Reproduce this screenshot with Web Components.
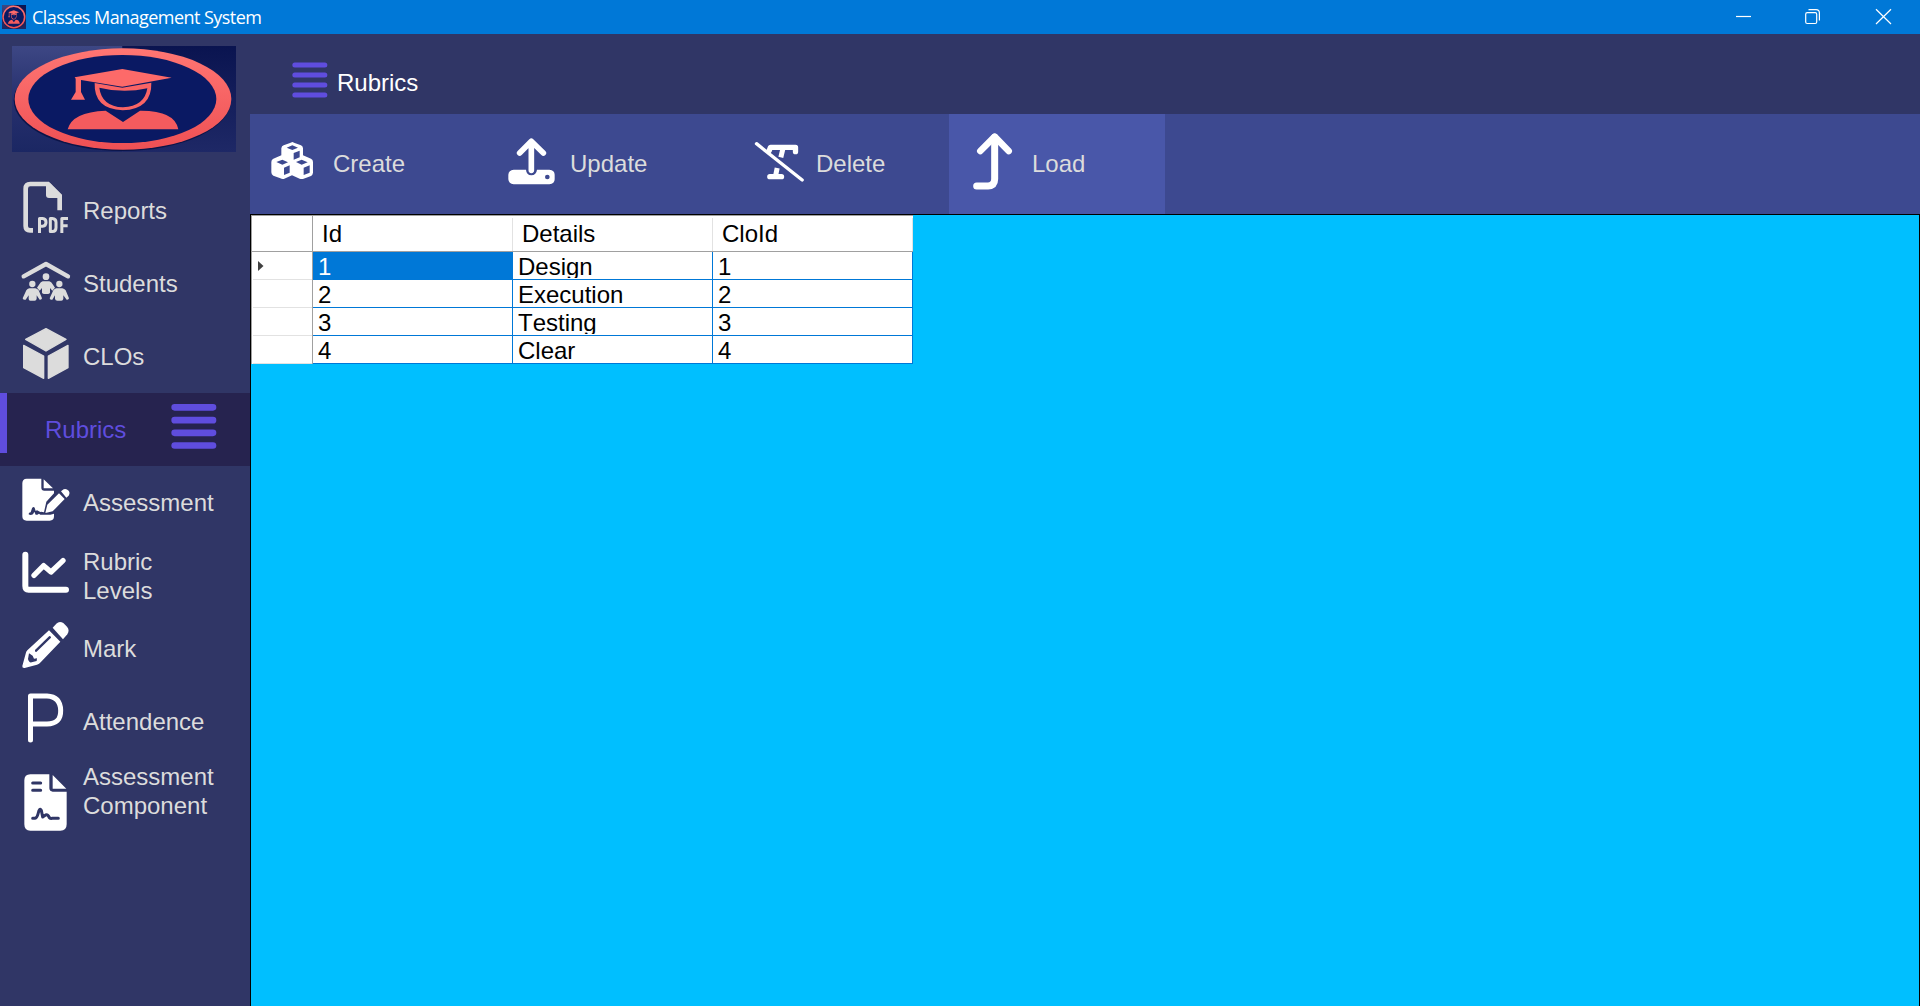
<!DOCTYPE html>
<html lang="en">
<head>
<meta charset="utf-8">
<title>Classes Management System</title>
<style>
html,body{margin:0;height:100%;overflow:hidden}
body{font-family:"Liberation Sans",Arial,sans-serif;font-size:24px;font-kerning:none}
</style>
</head>
<body>
<app-window></app-window>
<script>
const define = (name, html, setup) => customElements.define(name, class extends HTMLElement {
  connectedCallback() {
    if (this.shadowRoot) return;
    const t = document.createElement('template');
    t.innerHTML = typeof html === 'function' ? html(this) : html;
    this.attachShadow({ mode: 'open' }).append(t.content.cloneNode(true));
    if (setup) setup(this, this.shadowRoot);
  }
});

const icons = {
  reports: ['0 27 249 219', `<g fill="none" stroke="#dcdcdc"><path d="M99 196H90Q77 196 77 183V71Q77 57 91 57H144L179 92V136" stroke-width="14"/></g><path fill="#dcdcdc" d="M138 55H150L184 89V99H147Q138 99 138 90Z"/><g fill="none" stroke="#dcdcdc" stroke-width="9" stroke-linejoin="round"><path d="M118.500 204V160.500H128Q138 161 138 172T128 184H119"/><path d="M151 160.500V199.500H157Q168 199 168 188V172Q168 161 157 160.500Z"/><path d="M185.500 204V160.500H204M186 182H203"/></g>`],
  students: ['0 246 249 219', `<path d="M71 334L138 297L204 334" fill="none" stroke="#dcdcdc" stroke-width="13" stroke-linecap="round" stroke-linejoin="round"/><g fill="#dcdcdc"><circle cx="138" cy="335" r="10"/><circle cx="97" cy="357" r="9.500"/><circle cx="178" cy="357" r="9.500"/><path d="M128 349H148Q154 350 158 358L165 368L157 377L150 369V383Q148 387 143 387H133Q128 387 126 383V369L119 377L111 368L118 358Q122 350 128 349Z"/><path d="M88 370H106Q112 371 116 376L126 400Q125 405 119 404L110 391V401Q109 407 104 407H91Q86 407 86 401V391L77 404Q70 406 68 400L79 376Q82 371 88 370Z"/><path d="M169 370H187Q193 371 197 376L207 400Q206 405 200 404L190 391V401Q189 407 184 407H172Q166 407 165 401V391L157 404Q151 406 149 400L160 376Q163 371 169 370Z"/></g>`],
  clos: ['0 465 249 219', `<g fill="#dcdcdc" stroke="#dcdcdc" stroke-width="4" stroke-linejoin="round"><path d="M138 491L198 523L138 558L77 523Z"/><path d="M71 541L131 573V640L71 608Z"/><path d="M204 541L145 573V640L204 608Z"/></g>`],
  rubrics: ['498 24 252 219', `<path d="M524 67H639M524 105.500H639M524 143.500H639M524 181.500H639" stroke="#5f4dde" stroke-width="20" stroke-linecap="round"/>`],
  assessment: ['0 243 249 219', `<path fill="#fff" d="M80 281H124V308Q124 317 133 317H162V325L139 350L132 382L127 381Q124 379 121 381L114 377Q111 374 107 378L104 368Q100 363 96 370L92 382Q85 383 86 388Q91 392 99 388L103 380L107 389H112L117 386L121 389Q150 391 162 386V394Q162 407 149 407H80Q67 407 67 394V295Q67 281 80 281ZM131 283L159 310H131Z"/><path fill="#fff" d="M177 325L194 342L158 379L136 384L142 359ZM183 319L191 313Q199 310 206 317Q211 324 206 332L199 338Z"/>`],
  levels: ['0 462 249 219', `<g fill="none" stroke="#fff" stroke-linecap="round" stroke-linejoin="round"><path d="M76 509V603Q76 614 86 614H198" stroke-width="18"/><path d="M102 571L131 542L153 561L189 527" stroke-width="16"/></g>`],
  mark: ['0 21 249 219', `<path fill="#fff" d="M158 68L169 56Q178 47 190 54L201 65Q210 75 202 88L189 103Z"/><path fill="#fff" fill-rule="evenodd" d="M147 76L181 110L122 172Q118 177 111 179L74 189Q66 190 67 183L77 146Q78 140 82 136ZM148 93L105 135Q103 141 109 141L153 98Q154 93 148 93ZM87 145L84 162Q87 174 95 172L110 168L111 160L102 161L98 152Z"/>`],
  attendence: ['0 240 249 219', `<path d="M91.500 405V273H141Q181 275 182 316T141 357H94" fill="none" stroke="#fff" stroke-width="15" stroke-linecap="round" stroke-linejoin="round"/>`],
  component: ['0 459 249 219', `<path fill="#fff" d="M91 508H148V550Q149 560 158 560H200V658Q200 677 181 677H91Q73 677 73 658V526Q73 508 91 508ZM158 510L199 551H158Z"/><path d="M98 534H122M98 556H122" stroke="#303666" stroke-width="9" stroke-linecap="round"/><path d="M98 640H105Q111 639 114 627Q119 606 124 616L128 636L137 630Q144 627 148 638Q151 641 157 640H175" fill="none" stroke="#303666" stroke-width="9" stroke-linecap="round" stroke-linejoin="round"/>`],
  head: ['0 0 108 108', `<path d="M8.500 9H98.500M8.500 39H98.500M8.500 69H98.500M8.500 99H98.500" stroke="#5f4dde" stroke-width="15" stroke-linecap="round"/>`],
  create: ['0 252 249 300', `<path fill="#fff" fill-rule="evenodd" d="M127 336Q131 337 134 339L153 346Q159 349 159 355V376L183 386Q189 389 189 396V428Q188 435 183 438L161 446Q155 448 149 446L126 436L103 446Q97 448 91 445L70 437Q64 434 64 427V396Q64 389 70 386L94 376V355Q95 348 101 346L120 339ZM127 346L110 353L127 360L144 353ZM131 369V389L149 382V362ZM97 389L79 396L97 404L114 397ZM102 413V435L119 428V406ZM155 389L138 396L155 404L173 397ZM161 413V435L179 428V406Z"/>`],
  update: ['30 12 240 300', `<path fill="#fff" d="M101 179H138Q139 195 154 196Q169 195 171 179H208Q224 180 224 194V208Q224 222 208 223H101Q86 222 85 208V194Q86 180 101 179Z"/><path d="M154 181V96M119 129L154 94L190 129" fill="none" stroke="#fff" stroke-width="17" stroke-linecap="round" stroke-linejoin="round"/><circle cx="202" cy="201" r="7" fill="#3d4990"/>`],
  delete: ['765 12 240 300', `<g fill="none" stroke="#fff" stroke-linecap="round" stroke-linejoin="round"><path d="M866 122L870 112H945V125" stroke-width="16"/><path d="M908 113L901 142M890 174L885 199" stroke-width="15" stroke-linecap="butt"/><path d="M868 200H903" stroke-width="16"/><path d="M836 116L900 167" stroke="#3d4990" stroke-width="9" stroke-linecap="butt"/><path d="M828 101L965 210" stroke-width="10"/></g>`],
  load: ['147 42 249 300', `<g fill="none" stroke="#fff" stroke-linecap="round" stroke-linejoin="round"><path d="M230 258H264Q284 257 284 237V112" stroke-width="21"/><path d="M241 153L284 110L326 153" stroke-width="20"/></g>`]
};
const grad = `<defs><linearGradient id="r" x2="0" y2="1"><stop stop-color="#ff7673"/><stop offset="1" stop-color="#ee5054"/></linearGradient><linearGradient id="l" x2="0" y2="1"><stop stop-color="#3d4784"/><stop offset=".5" stop-color="#27306e"/><stop offset="1" stop-color="#1b2763"/></linearGradient><linearGradient id="d" x2="0" y2="1"><stop stop-color="#0a1450"/><stop offset="1" stop-color="#1e2866"/></linearGradient></defs>`;
const logo = `<svg viewBox="0 0 672 318" preserveAspectRatio="none">${grad}<path fill="url(#l)" d="M0 0H331V318H0Z"/><path fill="url(#d)" d="M331 0H672V318H331Z"/><ellipse cx="331" cy="163" rx="326" ry="152" fill="#0b1448"/><ellipse cx="333" cy="159" rx="325" ry="152" fill="url(#r)"/><ellipse cx="331" cy="159" rx="282" ry="132" fill="#0a1963"/><path fill="#fd6a69" d="M331 69L479 95L331 122L207 102V138L219 161H177L191 138V98L188 94Z"/><path fill="#f96465" fill-rule="evenodd" d="M248 111L331 125L418 110Q420 189 332 193Q245 189 248 111ZM262 125Q269 181 333 184Q398 181 406 127Q333 143 262 125Z"/><path fill="#f45b5e" d="M281 194L333 228L384 194Q489 193 499 250H167Q180 198 281 194Z"/></svg>`;

define('app-icon', `<style>:host{display:block;flex:none}svg{display:block;width:100%;height:100%;overflow:visible}</style>`, (h, r) => {
  const [box, body] = icons[h.getAttribute('name')];
  r.innerHTML += `<svg viewBox="${box}">${body}</svg>`;
});

define('app-logo', `<style>:host{display:block;flex:none}svg{display:block;width:100%;height:100%}</style>${logo}`);

define('title-bar', `<style>
:host{display:flex;align-items:center;height:34px;background:#0078d7;color:#fff;font:18px "Open Sans","Noto Sans",sans-serif}
app-logo{width:24px;height:24px;margin:0 6px 0 2px}
span{flex:1;white-space:nowrap;letter-spacing:-.55px;line-height:34px}
svg{display:block;flex:none}
</style><app-logo></app-logo><span><slot></slot></span>
<svg width="220" height="34" viewBox="0 0 220 34" fill="none" stroke="#fff" stroke-width="1.2"><path d="M36 16.500H51"/><rect x="105.700" y="12.700" width="11" height="10.800" rx="1.500"/><path d="M108.500 9.600H116Q119.400 9.600 119.400 13V20.500"/><path d="M176 9.300L191 24M191 9.300L176 24"/></svg>`);

define('menu-item', h => `<style>
:host{display:flex;align-items:center;height:73px;color:#dcdcdc;line-height:29px}
app-icon{width:83px;height:73px}
:host([active]){background:#26234f;color:#5f4dde;position:relative}
:host([active]) app-icon{width:84px}
:host([active]) .t{order:-1;width:121px;padding-left:45px}
:host([raised]) .t{padding-bottom:7px}
i{display:none}
:host([active]) i{display:block;position:absolute;left:0;top:0;width:7px;height:60px;background:#5f4dde}
</style><i></i><app-icon name="${h.getAttribute('icon')}"></app-icon><div class="t"><slot></slot></div>`);

define('side-menu', `<style>
:host{display:block;width:250px;flex:none;background:#303666}
app-logo{width:224px;height:106px;margin:12px 0 22px 12px}
</style><app-logo></app-logo><slot></slot>`);

define('page-header', `<style>
:host{display:flex;height:80px;background:#303666;color:#fff;box-sizing:border-box;padding:28px 0 0 42px}
app-icon{width:36px;height:36px}
span{margin:6px 0 0 9px;line-height:29px}
</style><app-icon name="head"></app-icon><span><slot></slot></span>`);

define('tool-button', h => `<style>
:host{display:flex;align-items:center;height:100px;color:#dcdcdc;line-height:29px;flex:none}
:host([active]){background:#4957a9}
app-icon{height:100px;width:var(--icon,80px)}
span{padding-bottom:1px}
</style><app-icon name="${h.getAttribute('icon')}"></app-icon><span><slot></slot></span>`);

define('tool-bar', `<style>
:host{display:flex;height:100px;background:#3d4990}
</style><slot></slot>`);

define('data-grid', `<style>
:host{display:block;box-sizing:border-box;flex:1;background:#00bfff;border:1px solid #000;border-bottom:0;color:#000}
.g{display:grid;grid-template-columns:62px 200px 200px 200px;width:662px;background:#fff}
.g>*{box-sizing:border-box;overflow:hidden;white-space:nowrap}
.h{height:37px;border-bottom:1px solid #a0a0a0;border-top:1px solid #a0a0a0;padding-left:9px;line-height:35px;background:linear-gradient(#e2e2e2,#e2e2e2) right 2px/1px 100% no-repeat}
.r{height:28px;display:flex;align-items:center;padding-left:6px;border-right:1px solid #a0a0a0;border-left:1px solid #a0a0a0}
.h.r{height:37px;background:none}
.r:not(.h){background:linear-gradient(#e2e2e2,#e2e2e2) 1px 100%/100% 1px no-repeat}
.c{height:28px;border-right:1px solid #0078d7;border-bottom:1px solid #0078d7;padding-left:5px;line-height:29px}
.c div{height:26px;overflow:hidden}
.s{background:#0078d7;color:#fff}
</style><div class="g"></div>`, (h, r) => {
  const rows = [['1','Design','1'],['2','Execution','2'],['3','Testing','3'],['4','Clear','4']];
  r.querySelector('.g').innerHTML = '<div class="h r"></div>' + ['Id','Details','CloId'].map(x => `<div class="h">${x}</div>`).join('') +
    rows.map((v, i) => `<div class="r">${i ? '' : '<svg width="6" height="10"><path d="M0 0L5.500 5L0 10Z" fill="#404040"/></svg>'}</div>` + v.map((x, j) => `<div class="c${i + j ? '' : ' s'}"><div>${x}</div></div>`).join('')).join('');
});

define('app-window', `<style>
:host{display:flex;flex-direction:column;width:1920px;height:1006px;background:#303666}
.b{display:flex;flex:1;min-height:0}
.m{display:flex;flex-direction:column;flex:1}
</style>
<title-bar>Classes Management System</title-bar>
<div class="b"><side-menu>
<menu-item icon="reports">Reports</menu-item>
<menu-item icon="students">Students</menu-item>
<menu-item icon="clos">CLOs</menu-item>
<menu-item icon="rubrics" active>Rubrics</menu-item>
<menu-item icon="assessment">Assessment</menu-item>
<menu-item icon="levels">Rubric<br>Levels</menu-item>
<menu-item icon="mark">Mark</menu-item>
<menu-item icon="attendence">Attendence</menu-item>
<menu-item icon="component" raised>Assessment<br>Component</menu-item>
</side-menu>
<div class="m"><page-header>Rubrics</page-header>
<tool-bar>
<tool-button icon="create" style="width:240px;--icon:83px">Create</tool-button>
<tool-button icon="update" style="width:245px">Update</tool-button>
<tool-button icon="delete" style="width:214px;--icon:81px">Delete</tool-button>
<tool-button icon="load" style="width:216px;--icon:83px" active>Load</tool-button>
</tool-bar><data-grid></data-grid></div></div>`);
</script>
</body>
</html>
